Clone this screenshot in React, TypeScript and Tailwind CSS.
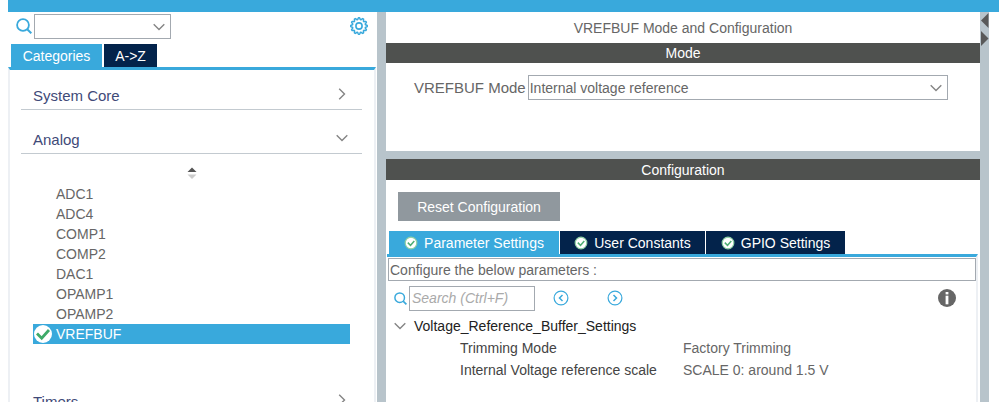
import React, { useState } from 'react';

const peripherals = ['ADC1', 'ADC4', 'COMP1', 'COMP2', 'DAC1', 'OPAMP1', 'OPAMP2', 'VREFBUF'];

const configTabs = [
  { name: 'Parameter Settings', width: 'w-[170px]' },
  { name: 'User Constants', width: 'w-[145px]' },
  { name: 'GPIO Settings', width: 'w-[139px]' },
];

const parameters = [
  { name: 'Trimming Mode', value: 'Factory Trimming' },
  { name: 'Internal Voltage reference scale', value: 'SCALE 0: around 1.5 V' },
];

// 12 rounded teeth around a ring
const GearIcon: React.FC = () => {
  const points = Array.from({ length: 96 }, (_, i) => {
    const angle = (i / 96) * Math.PI * 2;
    const radius = 7.4 + 0.9 * Math.tanh(2.2 * Math.cos(angle * 12));
    return `${(9 + radius * Math.sin(angle)).toFixed(2)},${(9 - radius * Math.cos(angle)).toFixed(2)}`;
  }).join(' ');
  return (
    <svg width="18" height="18" viewBox="0 0 18 18" fill="none" stroke="#39a9dc" strokeWidth="1.5">
      <polygon points={points} strokeLinejoin="round" />
      <circle cx="9" cy="9" r="3.1" strokeWidth="1.6" />
    </svg>
  );
};

const SearchIcon: React.FC<{ size: number }> = ({ size }) => (
  <svg width={size} height={size} viewBox="0 0 16 16" fill="none" stroke="#39a9dc" strokeWidth="1.8">
    <circle cx="7" cy="7" r="5.9" />
    <path d="M11.200 11.200L15.300 15.300" strokeWidth="2" />
  </svg>
);

const ChevronDown: React.FC<{ className?: string }> = ({ className }) => (
  <svg className={className} width="12" height="8" viewBox="0 0 12 8" fill="none" stroke="#858585" strokeWidth="1.4">
    <path d="M0.700 1.200L6 6.500l5.300-5.300" />
  </svg>
);

const ChevronRight: React.FC = () => (
  <svg width="8" height="12" viewBox="0 0 8 12" fill="none" stroke="#858585" strokeWidth="1.4">
    <path d="M1.200 0.700L6.500 6l-5.300 5.300" />
  </svg>
);

const TabCheck: React.FC = () => (
  <svg width="14" height="14" viewBox="0 0 14 14" fill="none">
    <circle cx="7" cy="7" r="5.8" fill="#fff" stroke="#8fd0a5" strokeWidth="1.2" />
    <path d="M3.800 6.600l2.700 2.700L10.300 5" stroke="#4fae74" strokeWidth="1.5" />
  </svg>
);

const SelectedCheck: React.FC = () => (
  <svg width="18" height="18" viewBox="0 0 18 18" fill="none">
    <circle cx="9" cy="9" r="9" fill="#fff" />
    <path d="M3 8.500l4.700 4.700L15 5" stroke="#3daa68" strokeWidth="2.8" />
  </svg>
);

const StepIcon: React.FC<{ d: string }> = ({ d }) => (
  <svg width="16" height="16" viewBox="0 0 16 16" fill="none" stroke="#39a9dc">
    <circle cx="8" cy="8" r="6.9" strokeWidth="1.2" />
    <path d={d} strokeWidth="1.5" />
  </svg>
);

const InfoIcon: React.FC = () => (
  <svg width="18" height="18" viewBox="0 0 18 18">
    <circle cx="9" cy="9" r="9" fill="#666" />
    <rect x="7.600" y="3" width="2.800" height="2.400" fill="#fff" />
    <rect x="7.600" y="6.700" width="2.800" height="8.600" fill="#fff" />
  </svg>
);

const Section: React.FC<{ name: string; open?: boolean }> = ({ name, open }) => (
  <button
    type="button"
    aria-expanded={!!open}
    className="flex h-11 w-full items-end justify-between border-b border-[#c3cad0] px-3 pb-[3px] text-left text-[15px] text-[#3f4a78]"
  >
    <span>{name}</span>
    <span className="flex h-6 w-4 items-center justify-center">{open ? <ChevronDown /> : <ChevronRight />}</span>
  </button>
);

const CategoriesPanel: React.FC<{ selected: string; onSelect: (name: string) => void }> = ({ selected, onSelect }) => (
  <aside className="flex w-[369px] shrink-0 flex-col pr-px">
    <div className="flex h-8 shrink-0 items-center justify-between px-2 pb-1">
      <div className="flex items-center gap-0.5">
        <label htmlFor="finder" aria-label="Find peripheral">
          <SearchIcon size={16} />
        </label>
        <div className="relative">
          <select id="finder" className="h-[25px] w-[137px] appearance-none border border-[#a3a9b0] bg-white px-1">
            <option></option>
          </select>
          <ChevronDown className="pointer-events-none absolute top-[9px] right-1.5" />
        </div>
      </div>
      <button type="button" aria-label="Settings">
        <GearIcon />
      </button>
    </div>
    <div role="tablist" className="flex h-[23px] shrink-0 gap-0.5 pl-[3px] text-white">
      <button type="button" role="tab" aria-selected className="w-[91px] bg-[#39a9dc]">
        Categories
      </button>
      <button type="button" role="tab" className="w-[53px] bg-[#03234b]">
        A-&gt;Z
      </button>
    </div>
    <div className="shrink-0 border-x-2 border-t-[3px] border-x-[#edf0f4] border-t-[#39a9dc] pr-3 pl-[11px]">
      <div className="-mt-1">
        <Section name="System Core" />
        <Section name="Analog" open />
      </div>
      <div className="flex h-[30px] items-center justify-center pt-2">
        <svg width="10" height="12" viewBox="0 0 10 12">
          <path d="M0.500 5L5 0.500 9.500 5z" fill="#555" />
          <path d="M0.500 7.500L5 12l4.500-4.500z" fill="#ccc" />
        </svg>
      </div>
      <ul className="px-3 text-[#666]">
        {peripherals.map((name) => (
          <li key={name}>
            <button
              type="button"
              onClick={() => onSelect(name)}
              className={`flex h-5 w-full items-center gap-1 pl-px ${name === selected ? 'bg-[#39a9dc] text-white' : ''}`}
            >
              <span className="w-[18px]">{name === selected && <SelectedCheck />}</span>
              {name}
            </button>
          </li>
        ))}
      </ul>
      <div className="pt-7">
        <Section name="Timers" />
      </div>
    </div>
  </aside>
);

const ModePanel: React.FC = () => (
  <section className="h-[139px] shrink-0 bg-white">
    <h1 className="flex h-[31px] items-center justify-center">VREFBUF Mode and Configuration</h1>
    <h2 className="flex h-5 items-center justify-center bg-[#4f514f] text-white">Mode</h2>
    <div className="flex items-center gap-0.5 pt-3 pr-8 pl-7">
      <label htmlFor="mode" className="shrink-0 text-[15px]">
        VREFBUF Mode
      </label>
      <div className="relative flex-1">
        <select id="mode" className="h-[25px] w-full appearance-none border border-[#a3a9b0] bg-white px-px">
          <option>Internal voltage reference</option>
        </select>
        <ChevronDown className="pointer-events-none absolute top-[9px] right-1.5" />
      </div>
    </div>
  </section>
);

const ConfigurationPanel: React.FC = () => {
  const [tab, setTab] = useState('Parameter Settings');
  return (
    <section className="flex flex-1 flex-col bg-white">
      <h2 className="flex h-[21px] items-center justify-center bg-[#4f514f] text-white">Configuration</h2>
      <div className="px-3 pt-3 pb-2.5">
        <button type="button" className="h-[29px] w-[162px] bg-[#90989e] text-white">
          Reset Configuration
        </button>
      </div>
      <div role="tablist" className="flex h-[23px] gap-px pl-[3px] text-white">
        {configTabs.map(({ name, width }) => (
          <button
            key={name}
            type="button"
            role="tab"
            aria-selected={name === tab}
            onClick={() => setTab(name)}
            className={`flex items-center justify-center gap-1.5 ${width} ${name === tab ? 'bg-[#39a9dc]' : 'bg-[#03234b]'}`}
          >
            <TabCheck />
            {name}
          </button>
        ))}
      </div>
      <div className="mr-0.5 ml-px flex-1 border-t-[3px] border-r-2 border-t-[#39a9dc] border-r-[#edf0f4] pl-px">
        <p className="mt-px flex h-[23px] items-center border border-[#a3a9b0] px-px">Configure the below parameters :</p>
        <div className="flex h-[34px] items-center pr-5 pl-1.5">
          <label htmlFor="search" aria-label="Search parameters">
            <SearchIcon size={13} />
          </label>
          <input
            id="search"
            type="text"
            placeholder="Search (Ctrl+F)"
            className="ml-0.5 h-[25px] w-[126px] border border-[#a3a9b0] px-0.5 italic placeholder:text-[#aaa]"
          />
          <button type="button" aria-label="Previous match" className="ml-[18px]">
            <StepIcon d="M9.500 5L6.500 8l3 3" />
          </button>
          <button type="button" aria-label="Next match" className="ml-[38px]">
            <StepIcon d="M6.500 5l3 3-3 3" />
          </button>
          <button type="button" aria-label="Information" className="ml-auto">
            <InfoIcon />
          </button>
        </div>
        <button type="button" aria-expanded className="flex h-[22px] items-center gap-2 pl-1.5 text-[#222]">
          <ChevronDown />
          Voltage_Reference_Buffer_Settings
        </button>
        <table>
          <tbody>
            {parameters.map(({ name, value }) => (
              <tr key={name} className="h-[22px]">
                <th scope="row" className="w-[295px] pl-[72px] text-left font-normal text-[#444]">
                  {name}
                </th>
                <td>{value}</td>
              </tr>
            ))}
          </tbody>
        </table>
      </div>
    </section>
  );
};

const App: React.FC = () => {
  const [selected, setSelected] = useState('VREFBUF');
  return (
    <div className="flex h-screen flex-col overflow-hidden bg-white pl-2 font-['Liberation_Sans',Arial,sans-serif] text-[14px] leading-5 text-[#666]">
      <header className="h-3 shrink-0 bg-[#39a9dc]" />
      <div className="flex min-h-0 flex-1">
        <CategoriesPanel selected={selected} onSelect={setSelected} />
        <main className="mr-2.5 flex flex-1 bg-[#b8c4cb] pl-[9px]">
          <div className="flex flex-1 flex-col gap-2">
            <ModePanel />
            <ConfigurationPanel />
          </div>
          <div className="w-[9px] pt-px">
            <svg width="9" height="34" viewBox="0 0 9 34" fill="#595959">
              <path d="M8.500 0v15L1 7.500z" />
              <path d="M1 18v15l7.500-7.500z" />
            </svg>
          </div>
        </main>
      </div>
    </div>
  );
};

export default App;
